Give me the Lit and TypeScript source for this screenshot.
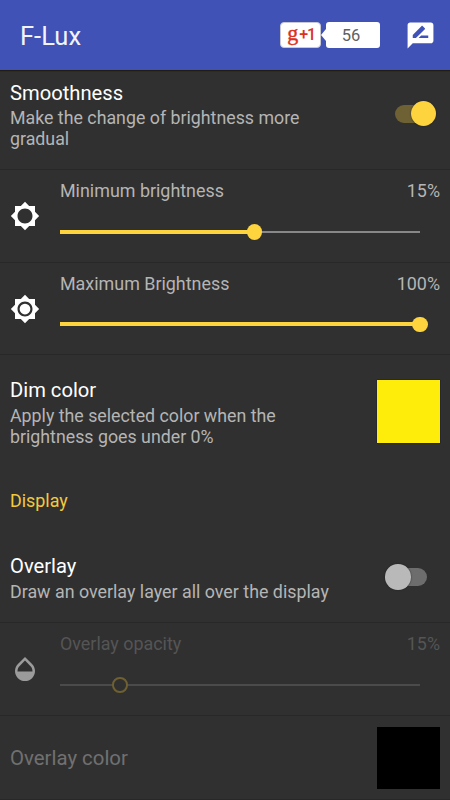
import { LitElement, html, css, svg, nothing } from "lit";
import { customElement, property } from "lit/decorators.js";

const ICONS = {
  min: "M20 15.31L23.31 12 20 8.69V4h-4.69L12 .69 8.69 4H4v4.69L.69 12 4 15.31V20h4.69L12 23.31 15.31 20H20v-4.69zM12 18c-3.31 0-6-2.69-6-6s2.69-6 6-6 6 2.69 6 6-2.69 6-6 6z",
  max: "M20 8.69V4h-4.69L12 .69 8.69 4H4v4.69L.69 12 4 15.31V20h4.69L12 23.31 15.31 20H20v-4.69L23.31 12 20 8.69zM12 18c-3.31 0-6-2.69-6-6s2.69-6 6-6 6 2.69 6 6-2.69 6-6 6zM12 7.7a4.3 4.3 0 1 0 0 8.6a4.3 4.3 0 1 0 0-8.6z",
  drop: "M17.66 8L12 2.35 6.34 8C4.78 9.56 4 11.64 4 13.64s.78 4.11 2.34 5.67 3.61 2.35 5.66 2.35 4.1-.79 5.66-2.35S20 15.64 20 13.64 19.22 9.56 17.66 8zM6 14c.01-2 .62-3.27 1.76-4.4L12 5.27l4.24 4.38C17.38 10.77 17.99 12 18 14H6z",
  review: "M20 2H4c-1.1 0-1.99.9-1.99 2L2 22l4-4h14c1.1 0 2-.9 2-2V4c0-1.1-.9-2-2-2zM6 14v-2.47l6.88-6.88c.2-.2.51-.2.71 0l1.77 1.77c.2.2.2.51 0 .71L8.47 14H6zm12 0h-7.5l2-2H18v2z",
};

const icon = (d: string) => html`<svg class="icon" viewBox="0 0 24 24">${svg`<path fill="currentColor" d=${d}></path>`}</svg>`;

@customElement("flux-switch")
class FluxSwitch extends LitElement {
  @property({ type: Boolean, reflect: true }) on = false;
  static styles = css`
    :host { display: flex; align-items: center; width: 41px; height: 26px; flex: none; }
    .track { display: flex; align-items: center; width: 32px; height: 18px; border-radius: 9px; background: #6d6d6d; margin-left: 9px; }
    .thumb { flex: none; width: 25.5px; height: 25.5px; border-radius: 50%; background: #b9b9b9; margin-left: -9.5px; box-shadow: 0 0 1.5px #1c1c1c; }
    :host([on]) .track { margin-left: 0; background: #6e6134; justify-content: flex-end; }
    :host([on]) .thumb { background: #fdd33e; margin: 0 -9px 0 0; }
  `;
  render() {
    return html`<div class="track"><div class="thumb"></div></div>`;
  }
}

@customElement("flux-slider-row")
class FluxSliderRow extends LitElement {
  @property() label = "";
  @property() value = "";
  @property() glyph: keyof typeof ICONS = "min";
  @property({ type: Number }) position = 0;
  @property({ type: Boolean, reflect: true }) disabled = false;
  static styles = css`
    :host { display: grid; grid-template-columns: 50px 1fr; box-sizing: border-box; height: 92.5px; padding-right: 10px; border-bottom: 1px solid #282828; color: #b5b5b5; }
    .side { display: flex; justify-content: center; padding-top: 31px; color: #fff; }
    .icon { width: 30px; height: 30px; }
    .body { padding-left: 10px; padding-top: 9.8px; }
    .head { display: flex; justify-content: space-between; font-size: 17.9px; line-height: 21px; }
    .bar { display: flex; align-items: center; height: 16px; margin: 22.8px 20px 0 0; }
    .fill { height: 4px; background: #fdd33e; }
    .thumb { flex: none; box-sizing: border-box; width: 15.4px; height: 15.4px; margin: 0 -7.7px; border-radius: 50%; background: #fdd33e; z-index: 1; }
    .rest { flex: 1; height: 1.6px; background: #8a878b; }
    :host([disabled]) { color: #555; }
    :host([disabled]) .side { color: #9b9b9b; }
    :host([disabled]) .fill { height: 2px; background: #4b4b4b; border-right: 7px solid #303030; box-sizing: border-box; }
    :host([disabled]) .rest { height: 2px; background: #4b4b4b; border-left: 7px solid #303030; }
    :host([disabled]) .thumb { background: none; border: 2.3px solid #6e6030; }
  `;
  render() {
    return html`
      <div class="side">${icon(ICONS[this.glyph])}</div>
      <div class="body">
        <div class="head"><span>${this.label}</span><span>${this.value}</span></div>
        <div class="bar">
          <div class="fill" style="width:${this.position}%"></div>
          <div class="thumb"></div>
          <div class="rest"></div>
        </div>
      </div>`;
  }
}

@customElement("app-root")
class AppRoot extends LitElement {
  static styles = css`
    :host { display: flex; flex-direction: column; width: 450px; height: 800px; overflow: hidden; background: #303030; font-family: Roboto, sans-serif; }
    header { display: flex; align-items: center; flex: none; box-sizing: border-box; height: 70px; padding: 0 14.5px 0 20px; background: #4052b5; box-shadow: 0 1px 1px #211d12; z-index: 1; }
    h1 { flex: 1; margin: 2.6px 0 0; font-size: 25.5px; line-height: 30px; font-weight: 400; color: #f3f4fb; }
    .icon { width: 31px; height: 31px; color: #fff; }
    .plus { display: flex; align-items: center; justify-content: center; box-sizing: border-box; width: 41px; height: 26px; border: 1px solid #c9c9d4; border-radius: 4px; background: #fff; color: #dc2f1e; line-height: 22px; }
    .g { font: 400 22px/22px "Liberation Serif", serif; margin: -5px 0 0 1px; -webkit-text-stroke: 0.4px #dc2f1e; }
    .one { font-size: 16px; font-weight: 500; letter-spacing: -1.2px; margin-left: 1px; }
    .tip { width: 5px; height: 12px; background: #fff; clip-path: polygon(100% 0, 100% 100%, 0 50%); }
    .count { display: flex; align-items: center; justify-content: center; box-sizing: border-box; width: 54px; height: 26px; padding: 1px 4px 0 0; margin-right: 24.5px; border-radius: 3px; background: #fff; color: #606060; font-size: 16.5px; }
    .row { display: flex; flex: none; justify-content: space-between; box-sizing: border-box; padding: 0 10px; }
    .line { border-bottom: 1px solid #282828; }
    h2 { margin: 0; font-size: 20.2px; line-height: 24px; font-weight: 400; color: #fff; }
    p { margin: 2.5px 0 0; max-width: 330px; font-size: 17.8px; line-height: 21px; color: #b5b5b5; }
    .smooth { height: 100.4px; padding-top: 10.5px; }
    .smooth flux-switch { margin: 20px 4px 0 0; }
    .dim { height: 113.6px; padding-top: 23.1px; }
    .dim p { margin-top: 2.2px; }
    .swatch { width: 63px; height: 63px; background: #feec0a; box-shadow: 0 0 1px #000030; margin-top: 1.5px; }
    .section { height: 66px; padding-top: 21px; font-size: 17.9px; line-height: 21px; color: #f3ca3b; }
    .over { height: 88.4px; padding-top: 19px; }
    .over p { margin-top: 3px; font-size: 17.85px; }
    .over flux-switch { margin: 10px 13.5px 0 0; }
    .tint { height: 84.2px; padding-top: 10.8px; }
    .tint h2 { margin-top: 19.2px; font-size: 20.4px; color: #707070; }
    .tint .swatch { margin: 0; height: 62.5px; background: #000; box-shadow: none; }
  `;
  private text(title: string, lines: string[] = []) {
    return html`<div>
      <h2>${title}</h2>
      ${lines.length ? html`<p>${lines.map((l, i) => html`${i ? html`<br />` : nothing}${l}`)}</p>` : nothing}
    </div>`;
  }
  render() {
    return html`
      <header>
        <h1>F-Lux</h1>
        <div class="plus"><span class="g">g</span><span class="one">+1</span></div>
        <div class="tip"></div>
        <div class="count">56</div>
        ${icon(ICONS.review)}
      </header>
      <div class="row smooth line">
        ${this.text("Smoothness", ["Make the change of brightness more", "gradual"])}
        <flux-switch on></flux-switch>
      </div>
      <flux-slider-row label="Minimum brightness" value="15%" glyph="min" .position=${54}></flux-slider-row>
      <flux-slider-row label="Maximum Brightness" value="100%" glyph="max" .position=${100}></flux-slider-row>
      <div class="row dim">
        ${this.text("Dim color", ["Apply the selected color when the", "brightness goes under 0%"])}
        <div class="swatch"></div>
      </div>
      <div class="row section">Display</div>
      <div class="row over line">
        ${this.text("Overlay", ["Draw an overlay layer all over the display"])}
        <flux-switch></flux-switch>
      </div>
      <flux-slider-row disabled label="Overlay opacity" value="15%" glyph="drop" .position=${16.7}></flux-slider-row>
      <div class="row tint line">
        ${this.text("Overlay color")}
        <div class="swatch"></div>
      </div>`;
  }
}
